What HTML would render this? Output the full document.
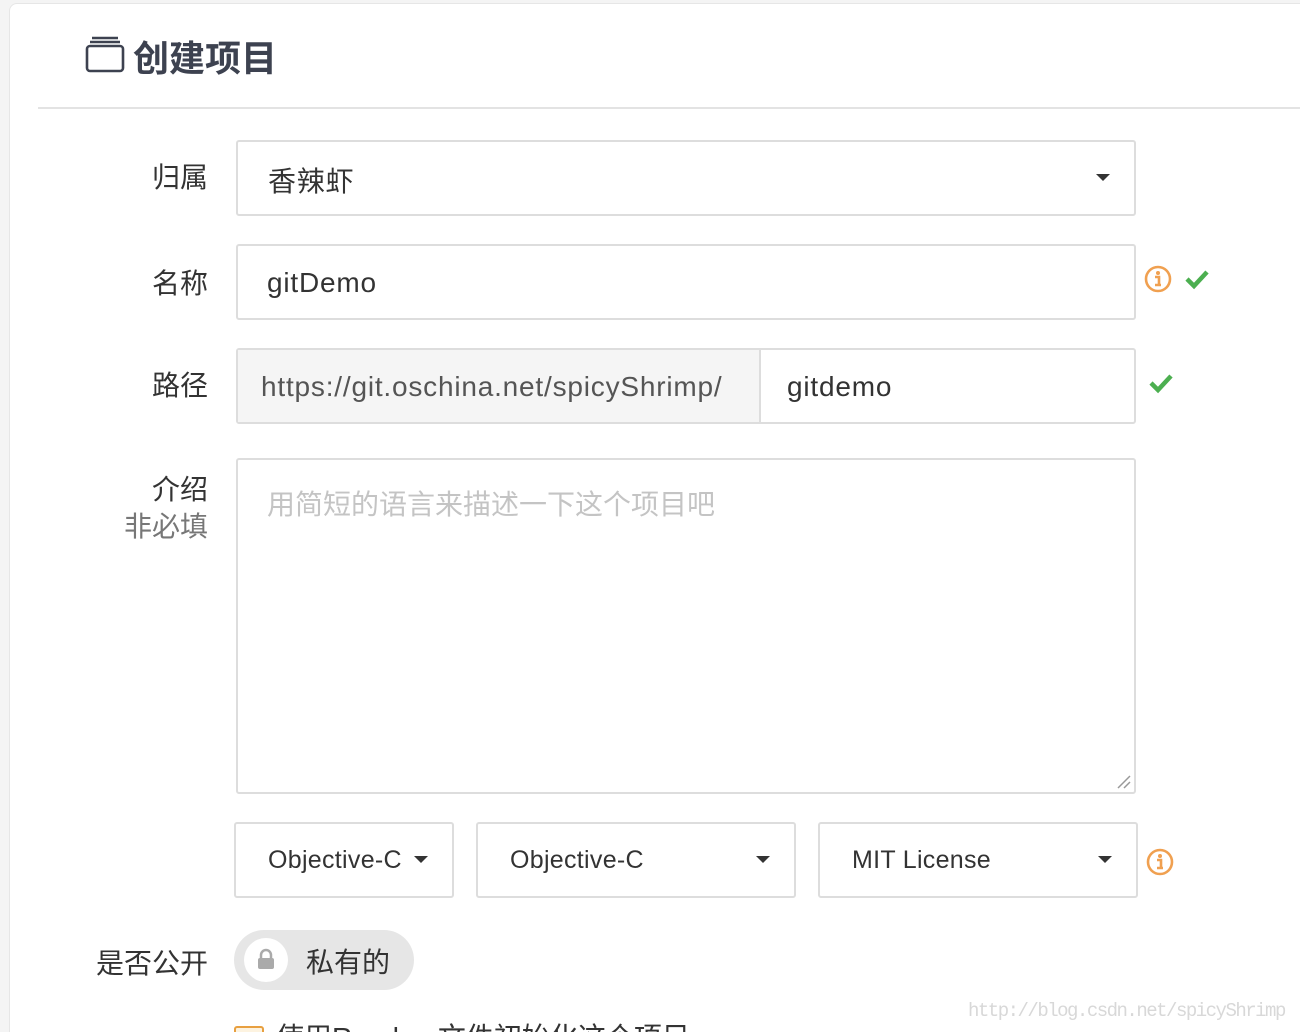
<!DOCTYPE html>
<html><head><meta charset="utf-8"><style>
html,body{margin:0;width:1300px;height:1032px;overflow:hidden}
body{background:#f4f4f4;font-family:"Liberation Sans","Noto Sans CJK SC",sans-serif;color:#333;position:relative}
.card{position:absolute;left:9px;top:3px;width:1320px;height:1100px;background:#fff;border:1px solid #e6e6e6;border-radius:8px}
.a{position:absolute}
.lbl{position:absolute;font-size:28px;color:#333;text-align:right;width:140px;left:68px}
.box{position:absolute;border:2px solid #ddd;border-radius:3px;background:#fff;box-sizing:border-box;font-size:28px;color:#333;letter-spacing:0.8px}
.caret{position:absolute;width:0;height:0;border-left:7px solid transparent;border-right:7px solid transparent;border-top:7px solid #333}
</style></head><body>
<div class="card"></div>
<svg class="a" style="left:84px;top:36px" width="42" height="38" viewBox="0 0 42 38"><path d="M8 2h26M6 6h30" stroke="#3d4250" stroke-width="2.4" fill="none"/><rect x="3" y="10" width="36" height="25" rx="3" stroke="#3d4250" stroke-width="2.6" fill="none"/></svg>
<div class="a" style="left:133px;top:30px;font-size:36px;font-weight:bold;color:#3d4250">创建项目</div>
<div class="a" style="left:38px;top:107px;width:1270px;height:2px;background:#e3e3e3"></div>

<div class="lbl" style="top:156px">归属</div>
<div class="box" style="left:236px;top:140px;width:900px;height:76px"><span class="a" style="left:30px;top:18px">香辣虾</span><div class="caret" style="left:858px;top:32px"></div></div>

<div class="lbl" style="top:262px">名称</div>
<div class="box" style="left:236px;top:244px;width:900px;height:76px"><span class="a" style="left:29px;top:21px">gitDemo</span></div>
<svg class="a" style="left:1144px;top:265px" width="28" height="28" viewBox="0 0 28 28"><circle cx="14" cy="14" r="12" stroke="#f0a050" stroke-width="2.6" fill="none"/><circle cx="14" cy="8" r="2" fill="#f0a050"/><path d="M11 12h4v8M11 20h6" stroke="#f0a050" stroke-width="2.6" fill="none"/></svg>
<svg class="a" style="left:1184px;top:268px" width="26" height="22" viewBox="0 0 26 22"><path d="M3 11l7 7L23 4" stroke="#4caf50" stroke-width="4.5" fill="none"/></svg>

<div class="lbl" style="top:364px">路径</div>
<div class="box" style="left:236px;top:348px;width:900px;height:76px"><div class="a" style="left:0;top:0;width:521px;height:72px;background:#f5f5f5;border-right:2px solid #ddd"></div><span class="a" style="left:23px;top:21px;color:#555">https://git.oschina.net/spicyShrimp/</span><span class="a" style="left:549px;top:21px">gitdemo</span></div>
<svg class="a" style="left:1148px;top:372px" width="26" height="22" viewBox="0 0 26 22"><path d="M3 11l7 7L23 4" stroke="#4caf50" stroke-width="4.5" fill="none"/></svg>

<div class="lbl" style="top:468px">介绍</div>
<div class="lbl" style="top:505px;color:#777">非必填</div>
<div class="box" style="left:236px;top:458px;width:900px;height:336px;letter-spacing:0"><span class="a" style="left:29px;top:23px;color:#c4c4c4">用简短的语言来描述一下这个项目吧</span><svg class="a" style="left:876px;top:312px" width="18" height="18"><path d="M16 4L4 16M16 10L10 16" stroke="#999" stroke-width="1.5"/></svg></div>

<div class="box" style="left:234px;top:822px;width:220px;height:76px;font-size:25px;letter-spacing:0.3px"><span class="a" style="left:32px;top:22px">Objective-C</span><div class="caret" style="left:178px;top:32px"></div></div>
<div class="box" style="left:476px;top:822px;width:320px;height:76px;font-size:25px;letter-spacing:0.3px"><span class="a" style="left:32px;top:22px">Objective-C</span><div class="caret" style="left:278px;top:32px"></div></div>
<div class="box" style="left:818px;top:822px;width:320px;height:76px;font-size:25px;letter-spacing:0.3px"><span class="a" style="left:32px;top:22px">MIT License</span><div class="caret" style="left:278px;top:32px"></div></div>
<svg class="a" style="left:1146px;top:848px" width="28" height="28" viewBox="0 0 28 28"><circle cx="14" cy="14" r="12" stroke="#f0a050" stroke-width="2.6" fill="none"/><circle cx="14" cy="8" r="2" fill="#f0a050"/><path d="M11 12h4v8M11 20h6" stroke="#f0a050" stroke-width="2.6" fill="none"/></svg>

<div class="lbl" style="top:942px">是否公开</div>
<div class="a" style="left:234px;top:930px;width:180px;height:60px;border-radius:30px;background:#e6e6e6"></div>
<div class="a" style="left:244px;top:938px;width:44px;height:44px;border-radius:22px;background:#fff"></div>
<svg class="a" style="left:257px;top:948px" width="18" height="22" viewBox="0 0 18 22"><path d="M4 10V7a5 5 0 0 1 10 0v3" stroke="#aaa" stroke-width="2.5" fill="none"/><rect x="1" y="10" width="16" height="11" rx="2" fill="#aaa"/></svg>
<div class="a" style="left:306px;top:941px;font-size:28px;color:#333">私有的</div>

<div class="a" style="left:234px;top:1026px;width:26px;height:20px;border:2px solid #e8a040;border-radius:3px;background:#fdf3e0"></div>
<div class="a" style="left:276px;top:1016px;font-size:28px;color:#333">使用Readme文件初始化这个项目</div>
<div class="a" style="left:968px;top:1000px;font-size:19px;color:#d8d8d8;font-family:'Liberation Mono',monospace;letter-spacing:-1.5px">http://blog.csdn.net/spicyShrimp</div>
</body></html>
